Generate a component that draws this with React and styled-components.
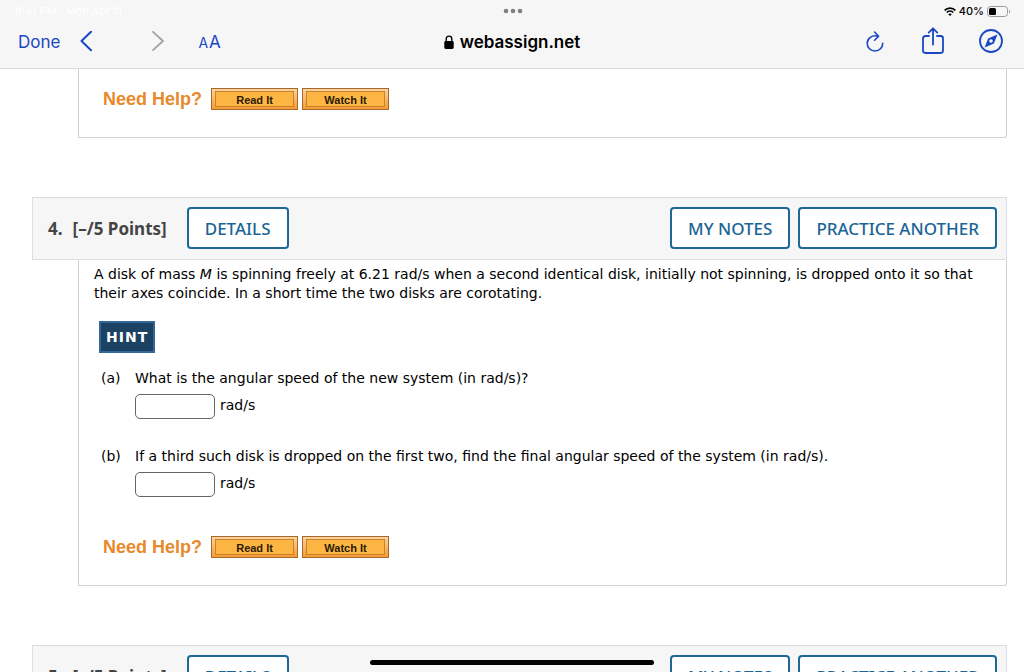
import styled, { createGlobalStyle } from "styled-components";

const GlobalStyle = createGlobalStyle`
    * {
        box-sizing: border-box;
    }

    body {
        margin: 0;
        background-color: #ffffff;
    }

    button {
        font: inherit;
        cursor: pointer;
    }
`

const NeedHelp = () => {
    return (
        <HelpRow>
            <HelpTitle>Need Help?</HelpTitle>
            <HelpButtons>
                <HelpButton><span>Read It</span></HelpButton>
                <HelpButton><span>Watch It</span></HelpButton>
            </HelpButtons>
        </HelpRow>
    )
}

const QuestionHeader = ({ number }) => {
    return (
        <StyledQuestionHeader>
            <Title>
                <span>{number}.</span>
                <Points>[–/5 Points]</Points>
            </Title>
            <OutlineButton>DETAILS</OutlineButton>
            <Actions>
                <OutlineButton>MY NOTES</OutlineButton>
                <OutlineButton>PRACTICE ANOTHER</OutlineButton>
            </Actions>
        </StyledQuestionHeader>
    )
}

const Part = ({ letter, text }) => {
    const id = `answer-${letter}`

    return (
        <StyledPart>
            <span>({letter})</span>
            <div>
                <label htmlFor={id}>{text}</label>
                <Answer>
                    <input id={id} type="text" />
                    <span>rad/s</span>
                </Answer>
            </div>
        </StyledPart>
    )
}

const StatusBar = () => {
    return (
        <StyledStatusBar>
            <Clock>
                <span>8:41 PM</span>
                <span>Mon Apr 11</span>
            </Clock>
            <svg width="20" height="6" viewBox="0 0 20 6" fill="#7f7f7f">
                <circle cx="3" cy="3" r="2.3" />
                <circle cx="10" cy="3" r="2.3" />
                <circle cx="17" cy="3" r="2.3" />
            </svg>
            <Battery>
                <svg width="12" height="9" viewBox="0 0 12 9" fill="none" stroke="#000000" strokeWidth="1.7">
                    <path d="M0.6 3.4C3.7 0.3 8.3 0.3 11.4 3.4" />
                    <path d="M2.7 5.5C4.6 3.7 7.4 3.7 9.3 5.5" />
                    <path d="M6 9L4.2 7.2C5.2 6.2 6.8 6.2 7.8 7.2Z" fill="#000000" stroke="none" />
                </svg>
                <span>40%</span>
                <svg width="24" height="11" viewBox="0 0 24 11">
                    <rect x="0.5" y="0.5" width="20" height="10" rx="3" fill="none" stroke="#9b9b9b" />
                    <rect x="2" y="2" width="7" height="7" rx="1.5" fill="#000000" />
                    <path d="M22 3.7C23.5 4.2 23.5 6.8 22 7.3Z" fill="#9b9b9b" />
                </svg>
            </Battery>
        </StyledStatusBar>
    )
}

const Toolbar = () => {
    return (
        <StyledToolbar>
            <ToolGroup>
                <ToolButton>Done</ToolButton>
                <ToolButton aria-label="Back" $before={20}>
                    <svg width="12" height="22" viewBox="0 0 12 22" fill="none" stroke="currentColor" strokeWidth="2">
                        <path d="M11 0.8L1.5 10L11 19.2" strokeLinecap="round" strokeLinejoin="round" />
                    </svg>
                </ToolButton>
                <ToolButton aria-label="Forward" $before={60} $muted>
                    <svg width="12" height="22" viewBox="0 0 12 22" fill="none" stroke="currentColor" strokeWidth="1.7">
                        <path d="M1 0.8L11 10L1 19.2" strokeLinecap="round" strokeLinejoin="round" />
                    </svg>
                </ToolButton>
                <ToolButton aria-label="Text size" $before={34}>
                    <small>A</small>A
                </ToolButton>
            </ToolGroup>
            <Address>
                <svg width="10" height="14" viewBox="0 0 10 14">
                    <path d="M2.2 7V3.9C2.2 0.2 7.8 0.2 7.8 3.9V7" fill="none" stroke="#000000" strokeWidth="1.4" />
                    <rect x="0.3" y="6" width="9.4" height="8" rx="1.4" />
                </svg>
                <span>webassign.net</span>
            </Address>
            <ToolGroup $end>
                <ToolButton aria-label="Reload">
                    <svg width="18" height="22" viewBox="0 0 18 22" fill="none" stroke="currentColor" strokeWidth="1.6" strokeLinecap="round" strokeLinejoin="round">
                        <path d="M11.8 5.2C6 3.6 1.2 7.6 1.2 12.2C1.2 16.6 4.6 20 9 20C13.4 20 16.7 16.6 16.7 12.4" />
                        <path d="M8.6 1L12.6 5.3L8.6 9.2" />
                    </svg>
                </ToolButton>
                <ToolButton aria-label="Share" $before={38}>
                    <svg width="22" height="30" viewBox="0 0 22 30" fill="none" stroke="currentColor" strokeWidth="1.8" strokeLinecap="round" strokeLinejoin="round">
                        <path d="M7 9H3.4C1.9 9 1 9.9 1 11.4V23.6C1 25.1 1.9 26 3.4 26H18.6C20.1 26 21 25.1 21 23.6V11.4C21 9.9 20.1 9 18.6 9H15" />
                        <path d="M11 17.5V1.5M6.7 5.6L11 1.3L15.3 5.6" />
                    </svg>
                </ToolButton>
                <ToolButton aria-label="Open in Safari" $before={35}>
                    <svg width="24" height="26" viewBox="0 0 24 26">
                        <circle cx="12" cy="12" r="11" fill="none" stroke="currentColor" strokeWidth="1.8" />
                        <path fillRule="evenodd" fill="currentColor" d="M18.4 5.6L14.9 14.5L5.6 18.4L9.1 9.5ZM12 10.2A1.8 1.8 0 1 0 12 13.8A1.8 1.8 0 1 0 12 10.2Z" />
                    </svg>
                </ToolButton>
            </ToolGroup>
        </StyledToolbar>
    )
}

const App = () => {
    return (
        <Screen>
            <GlobalStyle />
            <BrowserBar>
                <StatusBar />
                <Toolbar />
            </BrowserBar>
            <Page>
                <Question>
                    <QuestionBody $tail>
                        <NeedHelp />
                    </QuestionBody>
                </Question>
                <Question>
                    <QuestionHeader number={4} />
                    <QuestionBody>
                        <p>
                            A disk of mass <i>M</i> is spinning freely at 6.21 rad/s when a second identical disk, initially not spinning, is dropped onto it so that their axes coincide. In a short time the two disks are corotating.
                        </p>
                        <HintButton>HINT</HintButton>
                        <Part letter="a" text="What is the angular speed of the new system (in rad/s)?" />
                        <Part letter="b" text="If a third such disk is dropped on the first two, find the final angular speed of the system (in rad/s)." />
                        <NeedHelp />
                    </QuestionBody>
                </Question>
                <Question>
                    <QuestionHeader number={5} />
                </Question>
            </Page>
            <HomeIndicator />
        </Screen>
    )
}

export default App

const Screen = styled.div`
    height: 100vh;
    display: flex;
    flex-direction: column;
    overflow: hidden;
    color: #000000;
`

const BrowserBar = styled.header`
    flex: none;
    background-color: #f6f6f6;
    border-bottom: 1px solid #dcdcdc;
    font-family: Inter, "Liberation Sans", sans-serif;
`

const StyledStatusBar = styled.div`
    height: 22px;
    padding: 0 13px 0 15px;
    display: grid;
    grid-template-columns: 1fr auto 1fr;
    align-items: center;
    font-size: 11px;
`

const Clock = styled.div`
    display: flex;
    gap: 9px;
    color: #ffffff;
`

const Battery = styled.div`
    display: flex;
    justify-content: flex-end;
    align-items: center;
    gap: 3px;
    font-weight: 500;
`

const StyledToolbar = styled.div`
    height: 46px;
    padding: 0 21px 6px 18px;
    display: grid;
    grid-template-columns: 1fr auto 1fr;
    align-items: center;
`

const ToolGroup = styled.div`
    display: flex;
    align-items: center;
    justify-content: ${({ $end }) => $end ? "flex-end" : "flex-start"};
`

const ToolButton = styled.button`
    margin: 0 0 0 ${({ $before }) => $before || 0}px;
    padding: 0;
    border: none;
    background: none;
    color: ${({ $muted }) => $muted ? "#a0a0a0" : "#1a47c4"};
    font-size: 17px;
    line-height: 22px;

    svg {
        display: block;
    }

    small {
        margin-right: 1px;
        font-size: 14px;
    }
`

const Address = styled.div`
    display: flex;
    align-items: center;
    gap: 6px;
    padding-left: 3px;
    font-size: 17px;
    font-weight: 600;
`

const Page = styled.main`
    flex: 1;
    min-height: 0;
    overflow: hidden;
    padding: 0 17px 0 32px;
`

const Question = styled.section`
    margin-bottom: 59px;
`

const StyledQuestionHeader = styled.div`
    height: 63px;
    padding: 0 9px 2px 15px;
    display: flex;
    align-items: center;
    background-color: #f6f6f6;
    border: 1px solid #d9dee2;
    font-family: "Noto Sans", "Open Sans", sans-serif;
    font-size: 17px;
`

const Title = styled.h2`
    margin: 0 20px 0 0;
    padding-top: 1px;
    display: flex;
    gap: 10px;
    color: #444444;
    font-size: 17px;
    font-weight: 700;
`

const Points = styled.span`
    white-space: nowrap;
`

const Actions = styled.div`
    margin-left: auto;
    display: flex;
    gap: 8px;
`

const OutlineButton = styled.button`
    height: 42px;
    padding: 1px 16px 0;
    border: 2px solid #1f6794;
    border-radius: 4px;
    background-color: #ffffff;
    color: #1b6595;
    font-weight: 500;
    white-space: nowrap;
`

const QuestionBody = styled.div`
    margin-left: 46px;
    padding: ${({ $tail }) => $tail ? "8px 15px 27px" : "5px 15px 27px"};
    border: 1px solid #d0d3d5;
    border-top: none;
    border-radius: 0 0 3px 0;
    font-family: Verdana, "DejaVu Sans", sans-serif;
    font-size: 14px;
    line-height: 19px;

    p {
        margin: 0 0 18px;
    }
`

const HintButton = styled.button`
    height: 32px;
    margin: 0 0 16px 5px;
    padding: 0 5px;
    display: block;
    border: 2px solid #336699;
    background-color: #1c4263;
    color: #ffffff;
    font-weight: 700;
    letter-spacing: 1px;
`

const StyledPart = styled.div`
    padding: 0 0 28px 7px;
    display: grid;
    grid-template-columns: 34px 1fr;
`

const Answer = styled.div`
    margin-top: 6px;
    display: flex;
    gap: 5px;
    line-height: 22px;

    input {
        width: 80px;
        height: 25px;
        padding: 0 6px;
        border: 1px solid #666666;
        border-radius: 5px;
        background-color: #ffffff;
        font: inherit;
    }
`

const HelpRow = styled.div`
    padding: 11px 0 0 9px;
    display: flex;
    align-items: center;
    gap: 9px;
    font-family: "Liberation Sans", Arial, sans-serif;
`

const HelpTitle = styled.strong`
    color: #e8892b;
    font-size: 18px;
`

const HelpButtons = styled.div`
    display: flex;
    gap: 4px;
`

const HelpButton = styled.button`
    width: 87px;
    height: 22px;
    padding: 2px 3px;
    border: 1px solid #a5692c;
    background: linear-gradient(#fbd3a0, #f79a33);
    color: #2b1a05;
    font-size: 11px;
    font-weight: 700;

    span {
        height: 16px;
        display: block;
        border: 1px solid #c9812c;
        background-color: #fdb643;
        line-height: 16px;
    }
`

const HomeIndicator = styled.div`
    width: 284px;
    height: 5px;
    position: fixed;
    bottom: 7px;
    left: 50%;
    transform: translateX(-50%);
    border-radius: 3px;
    background-color: #000000;
`
